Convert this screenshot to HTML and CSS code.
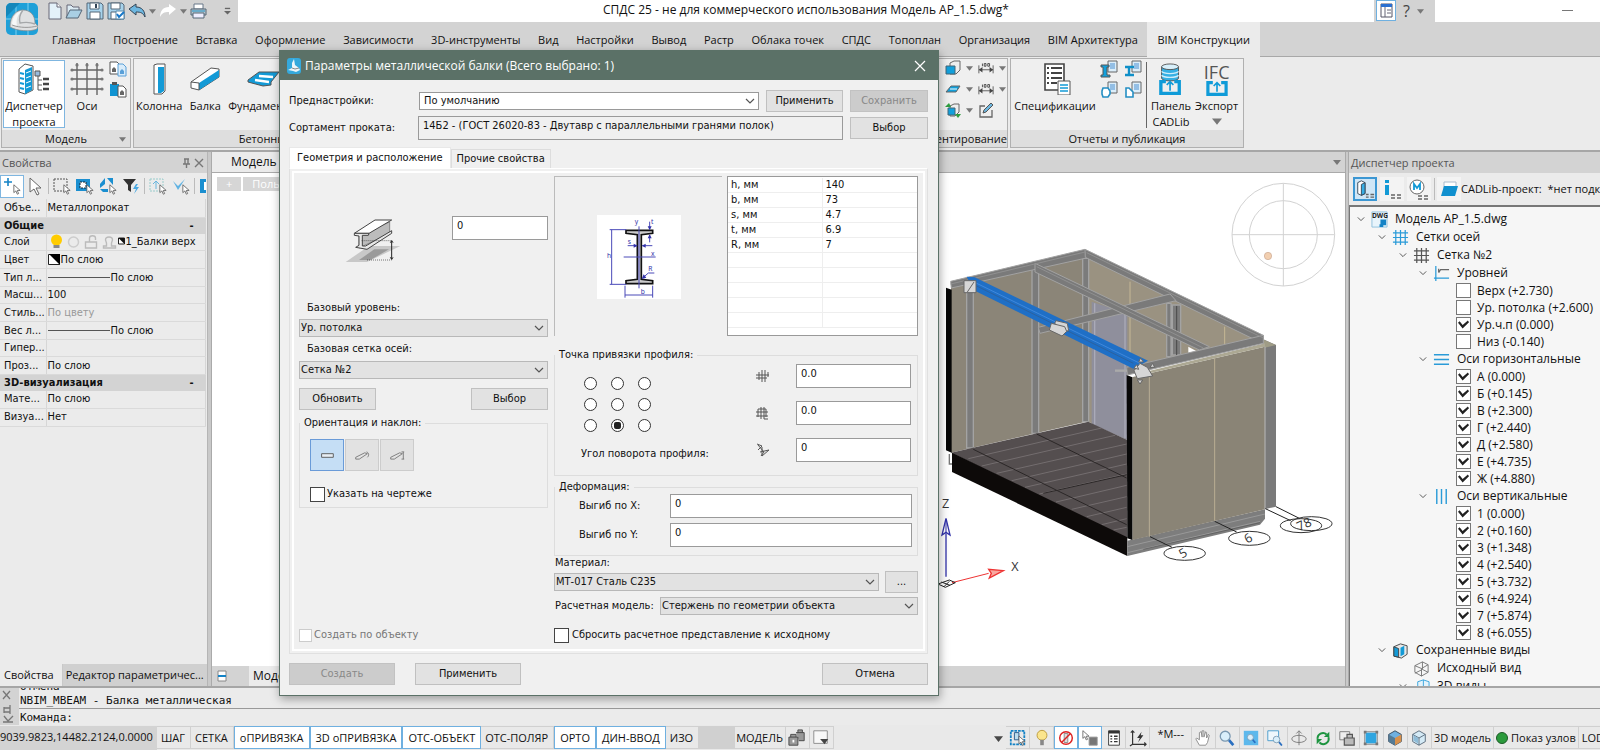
FILE: index.html
```html
<!DOCTYPE html>
<html lang="ru">
<head>
<meta charset="utf-8">
<title>СПДС 25</title>
<link rel="stylesheet" href="styles.css">
</head>
<body>
<svg class="defs" aria-hidden="true">
  <symbol id="i-tri" viewBox="0 0 8 6"><path d="M0 1h8L4 6z" fill="#777"/></symbol>
  <symbol id="i-chev" viewBox="0 0 10 10"><path d="M1 3l4 4 4-4" fill="none" stroke="#555" stroke-width="1.2"/></symbol>
  <symbol id="i-cursor" viewBox="0 0 10 14"><path d="M1 1v10l2.6-2.2L5.4 13l1.7-.8-1.8-4H9z" fill="#fff" stroke="#555"/></symbol>
  <symbol id="i-sheet" viewBox="0 0 18 18"><path d="M8 1h9v11H8z" fill="#dceefa" stroke="#666"/><path d="M10 4h5M10 6h5M10 8h5" stroke="#4a8fd0"/></symbol>
  <symbol id="i-up" viewBox="0 0 26 18"><path d="M8 2H2v14h22V2h-6" fill="none" stroke="#0f9bd8" stroke-width="4"/><path d="M13 13V3M9 6l4-4 4 4" fill="none" stroke="#0f9bd8" stroke-width="2"/></symbol>
  <symbol id="i-grid" viewBox="0 0 18 18"><path d="M4 1v16M9 1v16M14 1v16M1 4h16M1 9h16M1 14h16" fill="none" stroke="currentColor" stroke-width="1.3"/></symbol>
  <symbol id="i-cube" viewBox="0 0 18 18"><path d="M2 5l6-3 8 2v8l-6 4-8-2z" fill="#fff" stroke="#555"/><path d="M2 5l8 2v9M10 7l6-3" fill="none" stroke="#555"/></symbol>
  <symbol id="i-dim" viewBox="0 0 18 14"><path d="M1 4v9M17 4v9M1 9h16" stroke="#555" fill="none"/><path d="M1 9l4-3v6zM17 9l-4-3v6z" fill="#444"/><path d="M5 2v3M7 2h2v3H7zM11 2h2v3h-2z" stroke="#444" fill="none"/></symbol>
  <symbol id="i-mag" viewBox="0 0 18 18"><path d="M11 11l5 6" stroke="#2a6fc0" stroke-width="3"/><circle cx="7" cy="7" r="5.5" fill="#d9effb" stroke="#7a98b0" stroke-width="1.4"/></symbol>
</svg>

<header class="titlebar">
  <div class="quick">
    <svg class="logo" viewBox="0 0 32 32"><rect width="32" height="32" rx="5" fill="#1fa0d8"/><path d="M0 16h32M10 0v32M22 0v32" stroke="#7fd0f0"/><path d="M0 32V14L14 0H5a5 5 0 0 0-5 5z" fill="#1487bb"/><path d="M4 24C4 12 11 7 17 7c7 0 12 5 12 13l3 3-1 3c-7 3-20 2-27-2z" fill="#dfe1e2" stroke="#888" stroke-width=".7"/><path d="M6 23c0-9 4-14 10-15-5 4-6 9-5 15z" fill="#f7f8f8"/><path d="M17 7c-3 4-4 9-3 13 5-1 10-1 15 1" fill="none" stroke="#a5a8aa" stroke-width="1.4"/><path d="M6 22c8 3 18 3 25 1" stroke="#999" fill="none"/></svg>
    <button class="qb" aria-label="Новый"><svg width="14" height="18" viewBox="0 0 14 18"><path d="M1 1h8l4 4v12H1z" fill="#e4f1f9" stroke="#667"/><path d="M9 1v4h4" fill="#fff" stroke="#667"/></svg></button>
    <button class="qb" aria-label="Открыть"><svg width="18" height="18" viewBox="0 0 18 18"><path d="M2 15V3h4l2 2h6v3" fill="#dcebf3" stroke="#667"/><path d="M1 16L5 8h12l-4 8z" fill="#a9cfe4" stroke="#567"/></svg></button>
    <button class="qb" aria-label="Сохранить"><svg width="18" height="18" viewBox="0 0 18 18"><path d="M1 1h14l2 2v14H1z" fill="#a7d3ec" stroke="#567"/><path d="M4 1h9v6H4zM4 10h10v7H4z" fill="#fff" stroke="#567"/><path d="M10 2v4" stroke="#345" stroke-width="2"/></svg></button>
    <button class="qb" aria-label="Сохранить все"><svg width="18" height="18" viewBox="0 0 18 18"><path d="M1 1h14l2 2v14H1z" fill="#a7d3ec" stroke="#567"/><path d="M4 1h9v6H4zM4 10h10v7H4z" fill="#fff" stroke="#567"/><path d="M9 9h8v8H9z" fill="#fff" stroke="#58a"/><path d="M10 12l2 3 5-5" fill="none" stroke="#1677c8" stroke-width="2"/></svg></button>
    <button class="qb" aria-label="Отменить"><svg width="18" height="16" viewBox="0 0 18 16"><path d="M1 6l7-5v3c6 0 9 4 9 10-2-4-4-5-9-5v3z" fill="#6db7e0" stroke="#345"/></svg></button>
    <svg class="tri"><use href="#i-tri"/></svg>
    <button class="qb" aria-label="Повторить"><svg width="18" height="16" viewBox="0 0 18 16"><path d="M17 6l-7-5v3C4 4 1 8 1 14c2-4 4-5 9-5v3z" fill="#fff"/></svg></button>
    <svg class="tri"><use href="#i-tri"/></svg>
    <button class="qb" aria-label="Печать"><svg width="17" height="16" viewBox="0 0 17 16"><path d="M4 1h9v5H4z" fill="#fff" stroke="#678"/><path d="M1 6h15v6H1z" fill="#b7c7d0" stroke="#567"/><path d="M3 10h11v5H3z" fill="#eef" stroke="#567"/><path d="M2 8h13" stroke="#1b8fc4"/></svg></button>
    <svg class="more" viewBox="0 0 8 9"><path d="M1 1h6" stroke="#666" stroke-width="1.5"/><path d="M0 4h8L4 8z" fill="#666"/></svg>
  </div>
  <h1 class="app-title">СПДС 25 - не для коммерческого использования Модель AP_1.5.dwg*</h1>
  <div class="help">
    <button class="help-on" aria-label="Интерфейс"><svg width="13" height="15" viewBox="0 0 13 15"><path d="M1 1h11v13H1z" fill="#fff" stroke="#556"/><path d="M1 1h11v3H1z" fill="#2a6fd0"/><path d="M5 4v10M7 7h4M7 10h4" stroke="#667"/></svg></button>
    <button class="help-q">?</button>
    <svg class="tri"><use href="#i-tri"/></svg>
  </div>
  <div class="sys"><span class="min"></span></div>
</header>

<nav class="menu">
  <a href="#">Главная</a><a href="#">Построение</a><a href="#">Вставка</a><a href="#">Оформление</a><a href="#">Зависимости</a><a href="#">3D-инструменты</a><a href="#">Вид</a><a href="#">Настройки</a><a href="#">Вывод</a><a href="#">Растр</a><a href="#">Облака точек</a><a href="#">СПДС</a><a href="#">Топоплан</a><a href="#">Организация</a><a href="#">BIM Архитектура</a><a href="#" class="active">BIM Конструкции</a>
</nav>

<section class="ribbon">
  <div class="group g-model">
    <div class="tools">
      <button class="big on"><svg viewBox="0 0 34 32"><path d="M2 6l6-5 8 2v24l-8 4-6-2z" fill="#fff" stroke="#555"/><path d="M8 7l7-3v23l-7 4z" fill="#139ad6"/><path d="M9 10l5-2M9 15l5-2M9 20l5-2M9 25l5-2" stroke="#fff"/><path d="M3 10l4 1M3 15l4 1M3 20l4 1M3 25l4 1" stroke="#139ad6" stroke-width="2"/><path d="M18 8h5v5h-5z" fill="#9bd" stroke="#555"/><path d="M21 13v14h4M21 17h4M21 22h4" fill="none" stroke="#555"/><path d="M26 16h6M26 21h6M26 26h6" stroke="#444" stroke-width="2.6"/></svg><span>Диспетчер<br>проекта</span></button>
      <button class="big"><svg viewBox="0 0 34 32"><path d="M7 0v32M17 0v32M27 0v32M1 7h32M1 16h32M1 26h32" stroke="#666" stroke-width="1.4"/><g fill="#777"><circle cx="7" cy="2" r="1.6"/><circle cx="17" cy="2" r="1.6"/><circle cx="27" cy="2" r="1.6"/><circle cx="2" cy="7" r="1.6"/><circle cx="2" cy="16" r="1.6"/><circle cx="2" cy="26" r="1.6"/><circle cx="32" cy="7" r="1.6"/><circle cx="32" cy="16" r="1.6"/><circle cx="32" cy="26" r="1.6"/></g></svg><span>Оси</span></button>
      <div class="minis one">
        <svg viewBox="0 0 18 16"><path d="M1 1h7l2 2v10H1z" fill="#fff" stroke="#555"/><path d="M3 11V8l2-2 2 2v3z" fill="#666"/><path d="M9 3h5l3 3v9H9z" fill="#d9ecfa" stroke="#5aa0d8"/><path d="M11 13v-3l2-2 2 2v3z" fill="#5aa0d8"/></svg>
        <svg viewBox="0 0 18 16"><path d="M1 2h9v12H1z" fill="#0f93d2"/><path d="M3 0h5v3H3z" fill="#555"/><path d="M9 4h5l3 3v8H9z" fill="#fff" stroke="#555"/><path d="M11 13v-3l2-2 2 2v3z" fill="#666"/></svg>
      </div>
    </div>
    <div class="caption">Модель<svg class="tri"><use href="#i-tri"/></svg></div>
  </div>
  <div class="group g-concrete">
    <div class="tools">
      <button class="big"><svg viewBox="0 0 34 32"><path d="M12 2l3-1h8v27l-3 3h-8z" fill="#fff" stroke="#555"/><path d="M16 4h6v24l-3 2h-3z" fill="#139ad6"/></svg><span>Колонна</span></button>
      <button class="big"><svg viewBox="0 0 34 32"><path d="M3 19L23 5l8 1v8L11 27l-8-2z" fill="#fff" stroke="#555"/><path d="M11 20L31 7v7L11 27z" fill="#139ad6"/><path d="M3 19l8 1v7" fill="none" stroke="#555"/></svg><span>Балка</span></button>
      <button class="big"><svg viewBox="0 0 34 32"><path d="M2 17l11-8h20l-8 10v3l-8 1-15-4z" fill="#139ad6" stroke="#555"/><path d="M9 17l14 2M13 13l14 1" stroke="#fff" stroke-width="2.4"/></svg><span>Фундаменты</span></button>
    </div>
    <div class="caption">Бетонные конструкции</div>
  </div>
  <div class="group g-doc">
    <div class="tools end">
      <div class="minirows">
        <div><svg viewBox="0 0 16 16"><path d="M5 3l4-2h6v9l-4 4H5z" fill="#eee" stroke="#666"/><path d="M1 6h9v8H1z" fill="#12a0dc" stroke="#467"/></svg><svg class="tri"><use href="#i-tri"/></svg><svg><use href="#i-dim"/></svg><svg class="tri"><use href="#i-tri"/></svg></div>
        <div><svg viewBox="0 0 16 16"><path d="M1 11l5-6h9l-4 6z" fill="#12a0dc" stroke="#666"/><path d="M5 8h7" stroke="#fff"/></svg><svg class="tri"><use href="#i-tri"/></svg><svg><use href="#i-dim"/></svg><svg class="tri"><use href="#i-tri"/></svg></div>
        <div><svg viewBox="0 0 16 16"><path d="M5 4l4-2h5v8l-4 4H5z" fill="#eee" stroke="#666"/><path d="M3 6h7v7H3z" fill="#12a0dc" stroke="#467"/><path d="M0 5l4-4 2 4zM10 12l3 4 3-4z" fill="#2e9e3e"/></svg><svg class="tri"><use href="#i-tri"/></svg><svg viewBox="0 0 16 16"><path d="M7 4H2v11h12V8" fill="none" stroke="#666" stroke-width="1.3"/><path d="M5 11l1-3 7-7 2 2-7 7z" fill="#6db7e0" stroke="#555"/></svg></div>
      </div>
    </div>
    <div class="caption right">Документирование</div>
  </div>
  <div class="group g-report">
    <div class="tools">
      <button class="big wide"><svg viewBox="0 0 34 32"><path d="M7 1h19v26H7z" fill="#fff" stroke="#444" stroke-width="1.6"/><path d="M9 5h2M13 5h11M9 10h2M13 10h11M9 15h2M13 15h11M9 20h2M13 20h6" stroke="#444" stroke-width="2"/><path d="M20 18h12v14H20z" fill="#fff" stroke="#555"/><path d="M22 22h8M22 25h8M22 28h8" stroke="#139ad6" stroke-width="1.5"/></svg><span>Спецификации</span></button>
      <div class="minis">
        <svg viewBox="0 0 18 18"><use href="#i-sheet"/><path d="M1 5h8v2H7v8h3v2H1v-2h2V7H1z" fill="#12a0dc" stroke="#555"/></svg>
        <svg viewBox="0 0 18 18"><use href="#i-sheet"/><path d="M1 7h9M5 7v8M1 15h9" stroke="#0f8fc8" stroke-width="2.4" fill="none"/></svg>
        <svg viewBox="0 0 18 18"><use href="#i-sheet"/><path d="M3 7h5l2 3v3l-2 3H3l-1-3v-3z" fill="#fff" stroke="#258fc4" stroke-width="1.6"/></svg>
        <svg viewBox="0 0 18 18"><use href="#i-sheet"/><path d="M2 7h3l4 4v5H2z" fill="#fff" stroke="#258fc4" stroke-width="1.6"/></svg>
      </div>
      <div class="vline"></div>
      <button class="big"><svg viewBox="0 0 34 34"><path d="M7 4v12c0 4 18 4 18 0V4" fill="#35b0e4" stroke="#555"/><ellipse cx="16" cy="4" rx="9" ry="3" fill="#d8f0fb" stroke="#555"/><path d="M7 9c2 3 16 3 18 0M7 13c2 3 16 3 18 0" fill="none" stroke="#cfeefa" stroke-width="1.5"/><use href="#i-up" x="3" y="18" width="26" height="16"/></svg><span>Панель<br>CADLib</span></button>
      <button class="big ifc"><b>IFC</b><svg viewBox="0 0 26 18"><use href="#i-up"/></svg><span>Экспорт</span><svg class="tri"><use href="#i-tri"/></svg></button>
    </div>
    <div class="caption">Отчеты и публикация</div>
  </div>
</section>

<main class="work">
  <aside class="props">
    <div class="panel-title"><span>Свойства</span><svg class="pin" viewBox="0 0 22 10"><path d="M2 1h5M3 1v5M6 1v5M1 6h7M4.500 6v4M13 1l8 8M21 1l-8 8" stroke="#777" stroke-width="1.4" fill="none"/></svg></div>
    <div class="toolbar">
      <button class="tb on" aria-label="Добавить"><svg viewBox="0 0 20 20"><path d="M6 2v8M2 6h8" stroke="#1583c6" stroke-width="1.6"/><use href="#i-cursor" x="11" y="8" width="8" height="11"/></svg></button>
      <button class="tb" aria-label="Выбор"><svg viewBox="0 0 20 20"><path d="M5 2v14l4-3 3 6 2-1-3-6h5z" fill="#fff" stroke="#666"/></svg></button>
      <i class="sep"></i>
      <button class="tb" aria-label="Рамка"><svg viewBox="0 0 20 20"><path d="M2 3h13v12H2z" fill="none" stroke="#555" stroke-dasharray="2 1"/><use href="#i-cursor" x="11" y="8" width="8" height="11"/></svg></button>
      <button class="tb" aria-label="Все"><svg viewBox="0 0 20 20"><path d="M1 3h14v12H1z" fill="#1b8fd0"/><path d="M5 6h6v6H5z" fill="#fff" stroke="#123" stroke-dasharray="2 1"/><use href="#i-cursor" x="11" y="8" width="8" height="11"/></svg></button>
      <button class="tb" aria-label="Инверсия"><svg viewBox="0 0 20 20"><path d="M7 2v6L2 12V8zM9 2h6v7zM2 13h8v3H5z" fill="#1b8fd0"/><use href="#i-cursor" x="11" y="8" width="8" height="11"/></svg></button>
      <button class="tb" aria-label="Фильтр"><svg viewBox="0 0 20 20"><path d="M2 3h13l-5 6v7l-3-2V9z" fill="#333"/><path d="M15 8l-3 5h3l-2 5 5-7h-3l2-3z" fill="#4aa8e0"/></svg></button>
      <i class="sep"></i>
      <button class="tb" aria-label="Поднять"><svg viewBox="0 0 20 20"><path d="M2 3h13v12H2z" fill="none" stroke="#9cc" stroke-dasharray="2 1"/><path d="M8 13V5M5 8l3-3 3 3" fill="none" stroke="#69b5dd"/><use href="#i-cursor" x="11" y="8" width="8" height="11"/></svg></button>
      <button class="tb" aria-label="Применить выбор"><svg viewBox="0 0 20 20"><path d="M2 5l5 5 7-7-7 11z" fill="#5fb2e2"/><use href="#i-cursor" x="11" y="8" width="8" height="11"/></svg></button>
      <i class="sep"></i>
      <svg class="cut" viewBox="0 0 6 16"><path d="M0 1h6v14H0z" fill="#1b8fd0"/><path d="M4 4h2v8H4z" fill="#fff"/></svg>
    </div>
    <table class="grid">
      <tr><th>Объе...</th><td>Металлопрокат</td></tr>
      <tr class="head"><th colspan="2">Общие<span>-</span></th></tr>
      <tr><th>Слой</th><td><div class="cell"><svg class="layer" viewBox="0 0 76 16"><circle cx="8" cy="6" r="5.500" fill="#fc0"/><path d="M5 11h6v3H5z" fill="#888"/><circle cx="25" cy="8" r="5" fill="none" stroke="#ccc" stroke-width="1.500"/><path d="M37 8h11v6H37zM41 8V4c0-3 6-3 6 0v2M55 12h3V9l-1-3c0-4 7-4 7 0l-1 3v3h4v2H55z" fill="none" stroke="#bbb" stroke-width="1.4"/><path d="M70 4h6v6h-6z" fill="#fff" stroke="#222"/><path d="M70 4h6v6z" fill="#111"/></svg>1_Балки верх</div></td></tr>
      <tr><th>Цвет</th><td><div class="cell"><svg class="swatch" viewBox="0 0 12 11"><path d="M.5.5h11v10H.5z" fill="#fff" stroke="#222"/><path d="M1 0h11v11z"/></svg>По слою</div></td></tr>
      <tr><th>Тип л...</th><td><div class="cell"><i class="line"></i>По слою</div></td></tr>
      <tr><th>Масш...</th><td>100</td></tr>
      <tr><th>Стиль...</th><td class="dim">По цвету</td></tr>
      <tr><th>Вес л...</th><td><div class="cell"><i class="line"></i>По слою</div></td></tr>
      <tr><th>Гипер...</th><td></td></tr>
      <tr><th>Проз...</th><td>По слою</td></tr>
      <tr class="head"><th colspan="2">3D-визуализация<span>-</span></th></tr>
      <tr><th>Мате...</th><td>По слою</td></tr>
      <tr><th>Визуа...</th><td>Нет</td></tr>
    </table>
    <div class="tabs-bottom"><button class="sel">Свойства</button><button>Редактор параметричес...</button></div>
  </aside>

  <section class="view">
    <div class="doc-tabs"><button>Модель AP_1.5</button><svg class="tri"><use href="#i-tri"/></svg></div>
    <div class="canvas">
      <div class="chips"><span>+</span><span class="w">Пользовательский</span></div>
      <svg class="scene" viewBox="0 69 1245 1281">
        <g fill="none" stroke="#d2d2d2" stroke-width="3"><circle cx="1060" cy="254" r="154"/><circle cx="1060" cy="254" r="102"/><path d="M1060 100v308M906 254h308"/></g>
        <circle cx="1014" cy="318" r="11" fill="#f2cfb0" stroke="#c9a892" stroke-width="2"/>
        <path d="M63 410L465 320V816L63 908z" fill="#8b8578"/>
        <path d="M475 325L1000 568 835 610 592 660V868L475 815z" fill="#9a9281"/>
        <path d="M485 455L592 490V870L485 822z" fill="#8f8f9c"/>
        <path d="M494 460V824M585 490V864" stroke="#aaaab8" stroke-width="4"/>
        <path d="M600 395V640M884 530V590" stroke="#c5b795" stroke-width="3"/>
        <path d="M775 590l25 14-25 6z" fill="#fff"/>
        <g fill="#7b7b7b" stroke="#a3a3a3" stroke-width="4"><path d="M110 400h20v494h-20zM306 350h20v500h-20zM458 325h18v490h-18zM710 460h13v160h-13zM727 465h25v150h-25z"/></g>
        <path d="M740 468v148" stroke="#4a4a4a" stroke-width="3"/>
        <path d="M63 908L475 815 592 870V1165z" fill="#544e4f"/>
        <path d="M115 926l400-92M155 948l400-92M200 970l390-88M245 992l345-80M285 1012l305-70M328 1032l262-60M378 1056l212-50M425 1078l165-38M470 1100l120-28M515 1124l75-18M550 1140l40-8" stroke="#837d7e" stroke-width="2"/>
        <path d="M320 852l270 132M130 898l460 226M340 1030l250-56" stroke="#2b2727" stroke-width="3"/>
        <path d="M66 908L592 1162V1218L66 966z" fill="#0d0a09"/>
        <path d="M48 413l17 6v489l-17-7z" fill="#080808"/><path d="M58 912v30h8" fill="none" stroke="#777" stroke-width="4"/>
        <path d="M592 1172L1005 1078V1106L990 1124 592 1218z" fill="#7d7d7d"/><path d="M592 1190L1005 1092M592 1208l398-94" stroke="#999" stroke-width="3"/>
        <path d="M640 1198l350-80" stroke="#555" stroke-width="2"/>
        <path d="M1000 568l38 17v485l-34 8z" fill="#7a7a7a"/><path d="M998 568l40 17-34 8z" fill="#9f9c86"/>
        <path d="M607 682L1005 590V1078L607 1170z" fill="#8a8476"/>
        <path d="M607 682L660 662 1005 580v10z" fill="#aca893"/>
        <path d="M658 668v492M854 625v488" stroke="#b9ae94" stroke-width="3"/>
        <path d="M1005 590v488" stroke="#b9b9b9" stroke-width="3"/>
        <path d="M590 675l17 7v488l-15-5z" fill="#080808"/>
        <g fill="#7a7a7a" stroke="#a2a2a2" stroke-width="3">
          <path d="M62 394L465 298 478 322 64 414z"/>
          <path d="M465 298L1000 556 998 578 960 562 466 322z"/>
          <path d="M325 532L720 432 738 452 330 550z"/>
          <path d="M315 340L838 590 808 600 315 366z"/>
          <path d="M590 652L1000 556v24L655 660 592 675z"/>
        </g>
        <path d="M62 402L465 306M470 308L1000 564M320 350L820 594" stroke="#909090" stroke-width="3" fill="none"/>
        <path d="M110 380l24 2 520 250-44 24L130 420z" fill="#1f6fc6"/><path d="M130 395L630 640" stroke="#3f88dc" stroke-width="3"/><path d="M140 408L610 640" stroke="#2c62a0" stroke-width="3"/>
        <g fill="#d6d6d6" stroke="#666" stroke-width="3"><path d="M102 392h36v36h-36z"/><path d="M112 426l20-30"/><path d="M374 520l4-8 34 8 4 22-14 2z"/><path d="M364 520l40 10 6 14-14 14-38-18z"/><path d="M630 640l22 12 16 26-46 8-10-24z"/><path d="M632 624l8 12h-14zM668 640l6 12h-14zM630 702l8-12h-16zM612 654l8-10 6 14z"/></g>
        <path d="M555 662h36" stroke="#aaa" stroke-width="7"/>
        <path d="M660 1160l66 32M854 1114l66 32M1006 1076l76 36M1038 1070l72 36" stroke="#222" stroke-width="3"/>
        <g fill="none" stroke="#333" stroke-width="3"><ellipse cx="764" cy="1210" rx="62" ry="21"/><ellipse cx="958" cy="1165" rx="62" ry="21"/><ellipse cx="1113" cy="1127" rx="62" ry="21"/><ellipse cx="1144" cy="1121" rx="62" ry="21"/></g>
        <g class="axis"><text transform="translate(756 1226) rotate(-30)">5</text><text transform="translate(952 1181) rotate(-30)">6</text><text transform="translate(1108 1144) rotate(-25)">78</text><text x="36" y="1074">Z</text><text x="244" y="1264">X</text></g>
        <path d="M48 1280V1150" stroke="#33a" stroke-width="4"/><path d="M48 1105l-12 50 12-8 12 8z" fill="none" stroke="#33a" stroke-width="4"/><path d="M48 1108v40" stroke="#33a" stroke-width="3"/>
        <path d="M66 1298l110-28" stroke="#e33" stroke-width="3"/><path d="M220 1262l-44-4 8 12-6 14z" fill="#f8a8a0" stroke="#e33" stroke-width="4"/>
        <path d="M24 1302l34-12 18 8-30 14zM34 1296l26 10M42 1310l16-16" fill="none" stroke="#222" stroke-width="3"/>
      </svg>
    </div>
    <div class="sheet-tabs"><svg viewBox="0 0 10 12"><path d="M1 1h8v10H1z" fill="#fff" stroke="#888"/><path d="M1 6h8" stroke="#1583c6" stroke-width="2"/></svg><button>Модель</button></div>
  </section>

  <aside class="project">
    <div class="panel-title"><span>Диспетчер проекта</span></div>
    <div class="ptools">
      <button class="pt on" aria-label="Структура"><svg viewBox="0 0 22 22"><path d="M3 4l4-2 4 2v12l-4 2-4-2z" fill="#fff" stroke="#345"/><path d="M7 6l4-2v12l-4 2z" fill="#35aee6" stroke="#345"/><path d="M12 17h3M12 20h3M17 17h4M17 20h4" stroke="#666" stroke-width="1.500"/></svg></button>
      <button class="pt" aria-label="Сведения"><svg viewBox="0 0 22 22"><path d="M4 2h4v3H4zM4 7h4v10H4z" fill="#139ad6"/><path d="M10 17h4M10 20h4M16 17h4M16 20h4" stroke="#666" stroke-width="1.500"/></svg></button>
      <button class="pt" aria-label="Материалы"><svg viewBox="0 0 22 22"><circle cx="9" cy="9" r="7" fill="#fff" stroke="#666"/><path d="M6 12V6l3 4 3-4v6" fill="none" stroke="#139ad6" stroke-width="1.800"/><path d="M10 18h4M10 21h4M16 18h4M16 21h4" stroke="#666" stroke-width="1.500"/></svg></button>
      <i class="sep"></i>
      <button class="pt" aria-label="Проект"><svg viewBox="0 0 22 22"><path d="M6 4h12v8H6z" fill="#fff" stroke="#abc"/><path d="M3 18L6 8h14l-3 10z" fill="#1090cf"/></svg></button>
      <span class="pname">CADLib-проект:&nbsp; *нет подключения*</span>
    </div>
    <div class="tree">
      <div class="node l0"><svg class="ch"><use href="#i-chev"/></svg><svg class="ic" viewBox="0 0 18 18"><path d="M1 1h16v16H1z" fill="#e8f4fb" stroke="#8fc0dc"/><path d="M10 9h6v6h-3v2H9v-3h1z" fill="#1583c6"/><text class="dwg" x="1" y="7">DWG</text></svg>Модель AP_1.5.dwg</div>
      <div class="node l1"><svg class="ch"><use href="#i-chev"/></svg><svg class="ic blue"><use href="#i-grid"/></svg>Сетки осей</div>
      <div class="node l2"><svg class="ch"><use href="#i-chev"/></svg><svg class="ic"><use href="#i-grid"/></svg>Сетка №2</div>
      <div class="node l3"><svg class="ch"><use href="#i-chev"/></svg><svg class="ic" viewBox="0 0 18 18"><path d="M3 1v16M1 14h16" stroke="#2a9bd8" stroke-width="1.300"/><path d="M17 5h-9l-2 3M6 8V4" fill="none" stroke="#666" stroke-width="1.300"/></svg>Уровней</div>
      <label><input type="checkbox">Верх (+2.730)</label>
      <label><input type="checkbox">Ур. потолка (+2.600)</label>
      <label><input type="checkbox" checked>Ур.ч.п (0.000)</label>
      <label><input type="checkbox">Низ (-0.140)</label>
      <div class="node l3"><svg class="ch"><use href="#i-chev"/></svg><svg class="ic" viewBox="0 0 18 18"><path d="M1 4h16M1 9h16M1 14h16" stroke="#2a9bd8" stroke-width="1.500"/></svg>Оси горизонтальные</div>
      <label><input type="checkbox" checked>А (0.000)</label>
      <label><input type="checkbox" checked>Б (+0.145)</label>
      <label><input type="checkbox" checked>В (+2.300)</label>
      <label><input type="checkbox" checked>Г (+2.440)</label>
      <label><input type="checkbox" checked>Д (+2.580)</label>
      <label><input type="checkbox" checked>Е (+4.735)</label>
      <label><input type="checkbox" checked>Ж (+4.880)</label>
      <div class="node l3"><svg class="ch"><use href="#i-chev"/></svg><svg class="ic" viewBox="0 0 18 18"><path d="M4 1v16M9 1v16M14 1v16" stroke="#2a9bd8" stroke-width="1.500"/></svg>Оси вертикальные</div>
      <label><input type="checkbox" checked>1 (0.000)</label>
      <label><input type="checkbox" checked>2 (+0.160)</label>
      <label><input type="checkbox" checked>3 (+1.348)</label>
      <label><input type="checkbox" checked>4 (+2.540)</label>
      <label><input type="checkbox" checked>5 (+3.732)</label>
      <label><input type="checkbox" checked>6 (+4.924)</label>
      <label><input type="checkbox" checked>7 (+5.874)</label>
      <label><input type="checkbox" checked>8 (+6.055)</label>
      <div class="node l1"><svg class="ch"><use href="#i-chev"/></svg><svg class="ic" viewBox="0 0 18 18"><path d="M2 5l7-3 7 2v9l-6 4-8-2z" fill="#e8e8e8" stroke="#444"/><path d="M2 5l5 2v9l-5-1z" fill="#139ad6" stroke="#444"/><path d="M9 6l4-2v9l-4 2z" fill="#139ad6"/></svg>Сохраненные виды</div>
      <div class="node l2"><i class="ch"></i><svg class="ic" viewBox="0 0 18 18"><path d="M2 6l8-4 6 3v8l-7 4-7-4zM2 6l7 3 7-4M9 9v8M10 2v8l-8 4M10 10l6 3" fill="none" stroke="#777"/></svg>Исходный вид</div>
      <div class="node l2"><svg class="ch"><use href="#i-chev"/></svg><svg class="ic" viewBox="0 0 18 18"><path d="M5 4l6-2 6 2v12H5zM11 2v9" fill="#e4f3fb" stroke="#3aa5dd"/></svg>3D виды</div>
    </div>
  </aside>
</main>

<section class="command">
  <svg class="cmd-side" viewBox="0 0 18 36"><path d="M3 3l7 8M10 3l-7 8M4 19v6M4 20h6M4 24h6M10 17v9M3 34h10M4 28l4 5 5-5" fill="none" stroke="#777" stroke-width="1.300"/></svg>
  <div class="cmd-main">
    <div class="history"><p class="old">Отмена</p><p>NBIM_MBEAM - Балка металлическая</p></div>
    <label class="prompt">Команда:<input type="text" aria-label="Команда"></label>
  </div>
</section>

<footer class="status">
  <output class="coords">9039.9823,14482.2124,0.0000</output>
  <button>ШАГ</button><button>СЕТКА</button><button class="on">оПРИВЯЗКА</button><button class="on">3D оПРИВЯЗКА</button><button class="on">ОТС-ОБЪЕКТ</button><button>ОТС-ПОЛЯР</button><button class="on">ОРТО</button><button class="on">ДИН-ВВОД</button><button>ИЗО</button>
  <i class="gapbox"></i>
  <button class="model">МОДЕЛЬ</button>
  <button class="sb" aria-label="Замок"><svg viewBox="0 0 20 20"><path d="M1 9h10v9H1zM3 9V6h6v3M9 4h9v9h-6M11 4V1h5v3" fill="#999" stroke="#444"/><path d="M5 12h2v3H5z" fill="#fff"/></svg></button>
  <button class="sb" aria-label="Меню"><svg viewBox="0 0 20 20"><path d="M2 2h15v14H2z" fill="#f8f8f8" stroke="#888"/><path d="M9 11h9l-4 6z" fill="#444"/></svg></button>
  <i class="space"></i>
  <svg class="tri dark"><use href="#i-tri"/></svg>
  <button class="sb" aria-label="Выделение"><svg viewBox="0 0 20 20"><path d="M2 2h15v15H2z" fill="none" stroke="#1583c6" stroke-width="2" stroke-dasharray="3 1"/><path d="M6 4h5v8H6z" fill="#bde" stroke="#258"/><use href="#i-cursor" x="10" y="7" width="9" height="12"/></svg></button>
  <button class="sb" aria-label="Лампа"><svg viewBox="0 0 20 20"><circle cx="10" cy="7" r="5.500" fill="#fbe58c" stroke="#b9973a"/><path d="M8 12h4v6H8z" fill="#888"/></svg></button>
  <button class="sb on" aria-label="Запрет"><svg viewBox="0 0 20 20"><path d="M8 5h4v10H8z" fill="#ddd" stroke="#888"/><circle cx="10" cy="10" r="7" fill="none" stroke="#d22" stroke-width="1.600"/><path d="M5 15L15 5" stroke="#d22" stroke-width="1.600"/></svg></button>
  <button class="sb on" aria-label="Подсказка"><svg viewBox="0 0 20 20"><use href="#i-cursor" x="1" y="1" width="9" height="12"/><path d="M9 9h9v9H9z" fill="#777" stroke="#999"/></svg></button>
  <button class="sb" aria-label="Список"><svg viewBox="0 0 20 20"><path d="M4 2h12v16H4z" fill="#fff" stroke="#333"/><path d="M4 2h12v3H4z" fill="#333"/><path d="M6 8h2M10 8h4M6 11h2M10 11h4M6 14h2M10 14h4" stroke="#333" stroke-width="1.500"/></svg></button>
  <button class="sb" aria-label="Оси"><svg viewBox="0 0 20 20"><path d="M4 2v15h15M4 17l-3 2M2 4l2-2 2 2M17 15l2 2-2 2" fill="none" stroke="#333" stroke-width="1.300"/><path d="M14 3l-5 7h3l-2 5 6-8h-3z" fill="#333"/></svg></button>
  <button class="mask">*M---</button>
  <button class="sb" aria-label="Панорама"><svg viewBox="0 0 20 20"><path d="M6 18l-4-7 1-1 3 2V4l2-1 1 6V2l2 0v7l2-6 1 1v6l2-4 1 1-2 8-2 3z" fill="#fff" stroke="#888"/></svg></button>
  <button class="sb" aria-label="Масштаб"><svg viewBox="0 0 20 20"><use href="#i-mag" x="1" y="1" width="18" height="18"/></svg></button>
  <button class="sb" aria-label="Масштаб рамкой"><svg viewBox="0 0 20 20"><path d="M2 2h16v16H2z" fill="#5cb8ec"/><use href="#i-mag" x="5" y="5" width="11" height="11"/></svg></button>
  <button class="sb" aria-label="Масштаб окна"><svg viewBox="0 0 20 20"><path d="M2 2h12v11H2z" fill="#eef7fc" stroke="#49c"/><use href="#i-mag" x="7" y="7" width="12" height="12"/></svg></button>
  <button class="sb" aria-label="Орбита"><svg viewBox="0 0 20 20"><ellipse cx="10" cy="11" rx="8" ry="4" fill="none" stroke="#777"/><path d="M10 2v16M7 5l3-3 3 3" stroke="#777" fill="none"/></svg></button>
  <button class="sb" aria-label="Обновить вид"><svg viewBox="0 0 20 20"><path d="M4 11a6 6 0 0 1 10-5M16 9a6 6 0 0 1-10 6" fill="none" stroke="#1d9440" stroke-width="2.200"/><path d="M17 3v6h-6zM3 17v-6h6z" fill="#1d9440"/></svg></button>
  <button class="sb" aria-label="Блокировка"><svg viewBox="0 0 20 20"><path d="M2 3h11v9H2z" fill="#eee" stroke="#777"/><path d="M7 10h11v8H7zM10 10V6h6v4" fill="#bbb" stroke="#555" stroke-width="1.300"/></svg></button>
  <button class="sb" aria-label="Экран"><svg viewBox="0 0 20 20"><path d="M4 4h12v12H4z" fill="#2fa5e0"/><path d="M3 3h14v14H3z" fill="none" stroke="#888"/><path d="M2 2h3v3H2zM15 2h3v3h-3zM2 15h3v3H2zM15 15h3v3h-3z" fill="#777"/></svg></button>
  <button class="sb" aria-label="Заливка"><svg viewBox="0 0 20 20"><path d="M3 6l7-4 7 4v8l-7 4-7-4z" fill="#6fb0e0" stroke="#345"/><path d="M10 10l7-4v8l-7 4z" fill="#d9904a"/><path d="M3 6l7 4v8l-7-4z" fill="#557b96"/></svg></button>
  <button class="sb" aria-label="Контур"><svg viewBox="0 0 20 20"><path d="M3 6l7-4 7 4v8l-7 4-7-4z" fill="#d4eaf6" stroke="#567"/><path d="M3 6l7 4 7-4M10 10v8" fill="none" stroke="#567"/><path d="M4 7l5 3v6l-5-3z" fill="#8fbcd8"/></svg></button>
  <button class="txt">3D модель</button>
  <button class="txt"><i class="dot"></i>Показ узлов</button>
  <button class="txt lod">LOD</button>
</footer>

<section class="dialog" role="dialog" aria-labelledby="dlg-title">
  <header class="dlg-head"><svg width="14" height="16" viewBox="0 0 14 16"><rect width="14" height="16" rx="3" fill="#35a9dc"/><path d="M1 12l4-2V5l2-4 1 6 4 3 1 2-4 2-3-1z" fill="#eef6fa"/><path d="M5 10l3 1 4-1" fill="none" stroke="#888"/></svg><h2 id="dlg-title">Параметры металлической балки (Всего выбрано: 1)</h2><button aria-label="Закрыть"><svg width="12" height="12" viewBox="0 0 12 12"><path d="M1 1l10 10M11 1L1 11" stroke="#fff" stroke-width="1.200"/></svg></button></header>
  <div class="dlg-body">
    <div class="top">
      <label for="preset">Преднастройки:</label>
      <div class="row"><span class="select white"><select id="preset"><option>По умолчанию</option></select><svg><use href="#i-chev"/></svg></span><button class="btn">Применить</button></div>
      <button class="btn" disabled>Сохранить</button>
      <label for="profile">Сортамент проката:</label>
      <input id="profile" class="ro" type="text" readonly value="14Б2 - (ГОСТ 26020-83 - Двутавр с параллельными гранями полок)">
      <button class="btn">Выбор</button>
    </div>
    <div class="dlg-tabs"><button class="sel">Геометрия и расположение</button><button>Прочие свойства</button></div>
    <div class="page"><div class="page-in">
      <div class="left">
        <div class="level">
          <svg width="56" height="48" viewBox="0 0 168 144"><path d="M2 132L72 84h94L66 132z" fill="#c8c8c8"/><path d="M42 126L88 94h44l-56 32z" fill="#9a9a9a"/><path d="M42 90V50L134 12v34z" fill="#bcbcbc" stroke="#666" stroke-width="2"/><path d="M28 46L90 6h50L72 46z" fill="#fff" stroke="#444" stroke-width="3"/><path d="M28 46h44l-2 6H52v32h10l78-46v8L66 94l-34-6 10-6V54l-14-2z" fill="#e8e8e8" stroke="#444" stroke-width="3"/><path d="M50 68h90M66 126h74" stroke="#333" stroke-width="2" stroke-dasharray="3 3"/><path d="M140 68v56M136 74l4-6 4 6M136 118l4 6 4-6" fill="none" stroke="#222" stroke-width="3"/></svg>
          <input type="text" value="0" aria-label="Смещение">
        </div>
        <label class="lbl" for="lvl">Базовый уровень:</label>
        <span class="select"><select id="lvl"><option>Ур. потолка</option></select><svg><use href="#i-chev"/></svg></span>
        <label class="lbl second" for="net">Базовая сетка осей:</label>
        <span class="select"><select id="net"><option>Сетка №2</option></select><svg><use href="#i-chev"/></svg></span>
        <div class="pair"><button class="btn">Обновить</button><button class="btn">Выбор</button></div>
        <fieldset class="orient"><legend>Ориентация и наклон:</legend>
          <div class="toggles">
            <button class="on" aria-label="Горизонтально"><svg viewBox="0 0 20 14"><path d="M4 5h13v4H4z" fill="#e8eef4" stroke="#555"/></svg></button><button aria-label="Наклон 1"><svg viewBox="0 0 20 14"><path d="M3 9l10-5 3 1-9 6H3zM15 3c3 1 3 4 1 6" fill="none" stroke="#777"/></svg></button><button aria-label="Наклон 2"><svg viewBox="0 0 20 14"><path d="M3 9l10-5 3 1-9 6H3zM17 3v8M15 3h3M15 11h3" fill="none" stroke="#777"/></svg></button>
          </div>
          <label class="chk"><input type="checkbox">Указать на чертеже</label>
        </fieldset>
        <label class="chk off"><input type="checkbox" disabled>Создать по объекту</label>
      </div>
      <div class="rightcol">
        <div class="profile">
          <div class="preview"><svg width="84" height="84" viewBox="0 0 252 252"><path d="M0 0h252v252H0z" fill="#fff"/><path d="M87 46h80v9l-34 4v134l34 4v9H87v-9l34-4V59l-34-4z" fill="#ccc" stroke="#111" stroke-width="5"/><g fill="none" stroke="#4a4ab8" stroke-width="3"><path d="M126 34v186M80 126h96M44 44v164M38 44h50M38 208h50M84 212v36M167 212v36M84 240h83M158 20v22M158 60v22M92 92h28M136 92h30M138 188l16-14h18"/></g><path d="M158 46l-6-12h12zM158 58l-6 12h12zM122 92l-12-6v12zM134 92l12-6v12zM134 192l14-4-8-10z" fill="#33a"/><g class="dimtxt"><text x="113" y="27">y</text><text x="162" y="27">t</text><text x="92" y="88">s</text><text x="162" y="124">x</text><text x="30" y="129">h</text><text x="154" y="168">R</text><text x="131" y="238">b</text></g></svg></div>
          <div class="listbox"><table class="list">
            <tr><td>h, мм</td><td>140</td></tr><tr><td>b, мм</td><td>73</td></tr><tr><td>s, мм</td><td>4.7</td></tr><tr><td>t, мм</td><td>6.9</td></tr><tr><td>R, мм</td><td>7</td></tr><tr><td></td><td></td></tr><tr><td></td><td></td></tr><tr><td></td><td></td></tr><tr><td></td><td></td></tr><tr><td></td><td></td></tr>
          </table></div>
        </div>
        <fieldset class="anchor"><legend>Точка привязки профиля:</legend>
          <div class="a-left">
            <div class="radios"><input type="radio" name="p" aria-label="1"><input type="radio" name="p" aria-label="2"><input type="radio" name="p" aria-label="3"><input type="radio" name="p" aria-label="4"><input type="radio" name="p" aria-label="5"><input type="radio" name="p" aria-label="6"><input type="radio" name="p" aria-label="7"><input type="radio" name="p" aria-label="8" checked><input type="radio" name="p" aria-label="9"></div>
            <label for="ang">Угол поворота профиля:</label>
          </div>
          <div class="a-right">
            <div><svg viewBox="0 0 14 14"><path d="M0 6h13M0 9h11M3 3v8M6 1v12M9 1v12M12 3v5" fill="none" stroke="#555"/></svg><input type="text" value="0.0" aria-label="Смещение X"></div>
            <div><svg viewBox="0 0 14 14"><path d="M0 6h12M0 10h12M2 3v8M5 1v12M8 1v12M2 3h8v8M8 13h4" fill="none" stroke="#555"/></svg><input type="text" value="0.0" aria-label="Смещение Y"></div>
            <div><svg viewBox="0 0 14 14"><path d="M1 1l5 2-4 4M2 2l6 7M6 4v9l7-6-9 2M5 13l3-4" fill="none" stroke="#555"/></svg><input id="ang" type="text" value="0"></div>
          </div>
        </fieldset>
        <fieldset class="deform"><legend>Деформация:</legend>
          <label for="bx">Выгиб по X:</label><input id="bx" type="text" value="0">
          <label for="by">Выгиб по Y:</label><input id="by" type="text" value="0">
        </fieldset>
        <label class="mat" for="mat">Материал:</label>
        <div class="row mrow"><span class="select"><select id="mat"><option>МТ-017 Сталь С235</option></select><svg><use href="#i-chev"/></svg></span><button class="btn dots">...</button></div>
        <div class="row crow"><label for="calc">Расчетная модель:</label><span class="select"><select id="calc"><option>Стержень по геометрии объекта</option></select><svg><use href="#i-chev"/></svg></span></div>
        <label class="chk reset"><input type="checkbox">Сбросить расчетное представление к исходному</label>
      </div>
    </div></div>
    <div class="actions"><button class="btn" disabled>Создать</button><button class="btn">Применить</button><button class="btn cancel">Отмена</button></div>
  </div>
</section>
</body>
</html>
```

FILE: styles.css
```css
* { box-sizing: border-box; }
body {
  margin: 0;
  min-height: 100vh;
  height: 100vh;
  display: flex;
  flex-direction: column;
  position: relative;
  overflow: hidden;
  background: #d3d3d3;
  color: #111;
  font: 11px/16px "Open Sans", "Noto Sans", sans-serif;
}
button, input, select { font: inherit; color: inherit; margin: 0; }
button { border: 0; background: none; padding: 0; }
svg { display: block; flex: none; }
p, h1, h2 { margin: 0; font-weight: 400; }
.defs { position: absolute; width: 0; height: 0; }
.tri { width: 7px; height: 6px; }
.dark { filter: brightness(0.6); }

.titlebar { display: flex; height: 22px; flex: none; background: #fff; }
.quick { display: flex; align-items: center; gap: 3px; width: 238px; padding-left: 6px; background: #d3d3d3; position: relative; }
.quick .more { width: 7px; height: 9px; margin-left: 14px; }
.logo { width: 32px; height: 32px; align-self: flex-start; margin: 3px 7px 0 0; }
.app-title { flex: 1; text-align: center; font-size: 12px; line-height: 20px; }
.help { display: flex; align-items: center; width: 61px; gap: 7px; background: #d3d3d3; padding-left: 2px; }
.help-on { width: 20px; height: 21px; border: 1px solid #6fb0e0; background: #fff; display: grid; place-items: center; align-self: flex-start; }
.help-q { font-size: 16px; line-height: 20px; color: #444; }
.sys { width: 165px; display: flex; justify-content: center; padding: 10px 0 0 100px; }
.min { width: 11px; height: 1px; background: #777; }

.menu { display: flex; align-items: stretch; justify-content: space-between; height: 35px; flex: none; padding: 0 340px 0 44px; border-bottom: 1px solid #a8a8a8; }
.menu a { color: inherit; text-decoration: none; line-height: 36px; padding: 0 8px; white-space: nowrap; }
.menu .active { background: #ebebeb; height: 35px; padding: 0 10px; }

.ribbon { display: flex; gap: 2px; flex: none; height: 95px; padding: 1px 1px 2px; background: #ebebeb; border-bottom: 2px solid #a6a6a6; }
.group { display: flex; flex-direction: column; border: 1px solid #b0b0b0; background: #efefef; min-height: 0; }
.tools { flex: 1; min-height: 0; display: flex; align-items: flex-start; padding: 1px; }
.tools.end { justify-content: flex-end; }
.caption { flex: none; height: 17px; background: #dedede; text-align: center; line-height: 18px; position: relative; white-space: nowrap; }
.caption.right { text-align: right; }
.caption .tri { position: absolute; right: 4px; top: 6px; }
.g-model { width: 130px; }
.g-concrete { width: 336px; }
.g-concrete .tools { padding-left: 0; }
.g-doc { width: 537px; }
.g-report { width: 234px; }
.big { display: flex; flex-direction: column; align-items: center; padding: 3px 2px 0; min-width: 44px; }
.big > svg { width: 34px; height: 32px; margin-bottom: 3px; }
.g-concrete .big { min-width: 42px; }
.big.on { background: #fff; border: 1px solid #7fb6e0; height: 68px; padding: 2px 0 0; width: 62px; }
.big.wide { width: 88px; padding-right: 4px; }
.ifc > b { font: 18px/18px "Open Sans", sans-serif; color: #555; }
.ifc > svg { width: 24px; height: 15px; margin: 0 0 2px; }
.ifc > .tri { width: 10px; height: 8px; margin: 3px 0 0; }
.minis { display: grid; grid-template-columns: 18px 18px; gap: 3px 6px; }
.minis.one { grid-template-columns: 18px; margin-left: 0; gap: 5px; padding-top: 1px; }
.minis svg { width: 18px; height: 18px; }
.minis.one svg { height: 16px; }
.vline { width: 1px; height: 66px; background: #666; margin: 2px 2px 0 4px; }
.minirows { display: grid; gap: 5px; }
.minirows div { display: flex; align-items: center; gap: 5px; }
.minirows svg:not(.tri) { width: 16px; height: 16px; }

.work { flex: 1; display: flex; min-height: 0; background: #c9c9c9; border-bottom: 2px solid #a6a6a6; }
.panel-title { display: flex; justify-content: space-between; align-items: center; height: 21px; padding: 0 3px 0 2px; background: #d3d3d3; color: #555; font-size: 12px; }
.pin { width: 22px; height: 10px; }
.props { width: 208px; display: flex; flex-direction: column; background: #ebebeb; border-right: 1px solid #b5b5b5; }
.props .panel-title { font-size: 11px; }
.toolbar { display: flex; align-items: center; height: 26px; overflow: hidden; flex: none; }
.tb { width: 22px; height: 23px; margin-right: 1px; display: grid; place-items: center; flex: none; }
.tb svg { width: 20px; height: 20px; }
.tb.on { background: #fff; border: 1px solid #7fb6e0; width: 24px; margin-right: 0; }
.sep { width: 1px; height: 16px; background: #bbb; margin: 0 2px 0 1px; flex: none; }
.cut { width: 6px; height: 16px; margin-left: 3px; }
.grid { border-collapse: collapse; width: 206px; table-layout: fixed; font-family: "DejaVu Sans Condensed", "Noto Sans", sans-serif; }
.grid tr { height: 18px; }
.grid th, .grid td { padding: 0; height: 18px; line-height: 16px; font-weight: 400; text-align: left; border-bottom: 1px solid #dadada; border-right: 1px solid #d6d6d6; white-space: nowrap; overflow: hidden; }
.grid tr:nth-child(3n), .grid tr:nth-child(3n) > * { height: 17px; }
.grid th { width: 46px; padding-left: 4px; }
.grid td { padding-left: 1px; }
.grid .head, .grid .head th { height: 16px; line-height: 16px; }
.grid .head th { background: #d3d3d3; font-weight: 700; border: 0; }
.grid .head span { float: right; margin-right: 12px; }
.cell { display: flex; align-items: center; gap: 1px; height: 16px; }
.layer { width: 77px; height: 16px; }
.swatch { width: 12px; height: 11px; }
.line { width: 62px; height: 1px; background: #555; }
.dim { color: #999; }
.tabs-bottom { margin-top: auto; display: flex; height: 22px; background: #c9c9c9; }
.tabs-bottom button { background: #d0d0d0; padding: 0 3px; line-height: 20px; white-space: nowrap; }
.tabs-bottom .sel { background: #ebebeb; padding: 0 8px 0 4px; margin-right: 1px; }

.view { flex: 1; min-width: 0; display: flex; flex-direction: column; margin: 0 2px 0 3px; border: solid #aaa; border-width: 0 1px; }
.doc-tabs { display: flex; justify-content: space-between; align-items: center; height: 21px; background: #d3d3d3; border-bottom: 1px solid #aaa; flex: none; }
.doc-tabs button { background: #ebebeb; padding: 0 20px 0 19px; line-height: 20px; font-size: 12px; }
.doc-tabs .tri { width: 10px; height: 6px; margin-right: 3px; }
.canvas { flex: 1; min-height: 0; position: relative; background: #fff; }
.chips { display: flex; gap: 2px; padding: 4px 5px; color: #fff; line-height: 14px; }
.chips span { background: #d6d6d6; padding: 0 9px; }
.scene { position: absolute; right: 0; top: 0; width: 415px; height: 427px; }
.axis text { font: 38px "Open Sans", sans-serif; fill: #333; }
.sheet-tabs { display: flex; height: 20px; background: #d3d3d3; align-items: center; flex: none; }
.sheet-tabs svg { width: 10px; height: 12px; margin: 0 22px 0 5px; }
.sheet-tabs button { background: #ebebeb; height: 20px; padding: 0 4px; font-size: 12px; }

.project { width: 252px; display: flex; flex-direction: column; background: #ebebeb; border-left: 1px solid #aaa; white-space: nowrap; overflow: hidden; }
.project .panel-title { flex: none; font-size: 11px; }
.ptools { display: flex; align-items: center; height: 32px; padding-left: 4px; flex: none; }
.pt { width: 24px; height: 24px; margin-right: 3px; background: #f3f3f3; display: grid; place-items: center; flex: none; }
.pt svg { width: 22px; height: 22px; }
.pt.on { background: #cfe6f6; border: 2px solid #3c97d3; }
.pt.on svg { width: 20px; height: 20px; }
.ptools .sep { height: 22px; margin: 0 2px 0 0; }
.pt:nth-child(5) { margin-right: 0; }
.tree { flex: 1; min-height: 0; overflow: hidden; background: #f6f6f6; border: solid #777; border-width: 2px 0 0 1px; padding-top: 3px; font-size: 12px; }
.node { display: flex; align-items: center; height: 18px; }
.node .ch { width: 8px; height: 10px; margin-right: 6px; }
.node .ic { width: 17px; height: 17px; margin-right: 7px; color: #555; }
.node .blue { color: #2a9bd8; }
.dwg { font: bold 7px "Open Sans", sans-serif; fill: #222; }
.l0 { padding-left: 7px; }
.l1 { padding-left: 28px; }
.l2 { padding-left: 49px; }
.l3 { padding-left: 69px; }
.tree label { display: flex; align-items: center; height: 17px; padding-left: 106px; gap: 6px; }
input[type="checkbox"] { appearance: none; width: 15px; height: 15px; border: 1px solid #444; background: #fff; flex: none; display: grid; place-items: center; margin: 0; }
.tree input[type="checkbox"] { border-color: #777; }
input[type="checkbox"]:checked::before { content: ""; width: 11px; height: 9px; background: #222; clip-path: polygon(0 30%, 15% 15%, 42% 55%, 90% 5%, 100% 25%, 42% 95%); }

.command { flex: none; height: 37px; display: flex; background: #d3d3d3; }
.cmd-side { width: 18px; height: 36px; }
.cmd-main { flex: 1; margin-left: 1px; background: #ebebeb; font: 11px/14px "DejaVu Sans Mono", monospace; }
.history { height: 21px; overflow: hidden; display: flex; flex-direction: column; justify-content: flex-end; border-bottom: 1px solid #999; padding-left: 1px; }
.history p { flex: none; }
.prompt { display: flex; padding: 2px 0 0 1px; }
.prompt input { flex: 1; }

.status { flex: none; display: flex; height: 25px; padding-top: 1px; background: #e9e9e9; white-space: nowrap; overflow: hidden; }
.coords { background: #d3d3d3; width: 157px; line-height: 22px; flex: none; }
.status button { height: 23px; border: 1px solid #d0d0d0; border-left: 0; padding: 0 5px 0 4px; flex: none; }
.status .on { background: #fff; border: 1px solid #6fb0e0; padding: 0 5px; }
.gapbox { width: 36px; background: #d0d0d0; height: 23px; flex: none; }
.status .model { padding: 0 2px 0 1px; }
.status .sb { width: 24px; padding: 0; display: grid; place-items: center; }
.sb svg { width: 18px; height: 18px; }
.space { flex: 1; }
.status .dark { align-self: center; width: 9px; height: 7px; margin-right: 3px; }
.status .mask { line-height: 12px; padding: 0 7px 8px; }
.status .txt { padding: 0 2px; display: flex; align-items: center; gap: 3px; }
.status .lod { padding: 0 0 0 3px; border-right: 0; margin-right: -4px; }
.dot { width: 12px; height: 12px; border-radius: 50%; background: #2b9a3c; border: 1px solid #1c5a26; }

.dialog { position: absolute; left: 279px; top: 50px; width: 660px; background: #f0f0f0; border: 1px solid #5b7167; box-shadow: 1px 3px 9px rgba(0, 0, 0, 0.35); font-family: "DejaVu Sans Condensed", "Noto Sans", sans-serif; }
.dlg-head { display: flex; align-items: center; height: 29px; padding: 0 12px 0 7px; background: #5b7167; color: #fff; }
.dlg-head h2 { flex: 1; margin-left: 4px; font: 12px/20px "Open Sans", sans-serif; }
.dlg-body { padding: 9px 10px 10px 9px; }
.top { display: grid; grid-template-columns: 129px 1fr 78px; grid-auto-rows: 24px; gap: 3px 0; align-items: center; }
.top .row { align-items: center; gap: 7px; padding-left: 1px; }
.top .row .btn { width: 77px; }
.top .row, .top .ro { margin-right: 7px; }
.row { display: flex; }
.btn { height: 22px; background: #e2e2e2; border: 1px solid #c0c0c0; line-height: 18px; }
.btn:disabled { background: #ccc; border-color: #c2c2c2; color: #888; }
input[type="text"] { border: 1px solid #9a9a9a; background: #fff; height: 24px; padding: 0 4px 6px; border-radius: 0; outline: 0; min-width: 0; }
.prompt input[type="text"] { border: 0; background: none; height: 14px; padding: 0; }
.top .ro { background: #f0f0f0; }
.select { position: relative; display: flex; flex: 1; }
.select select { appearance: none; width: 100%; height: 18px; border: 1px solid #b8b8b8; border-radius: 0; background: #e2e2e2; padding: 0 20px 0 1px; line-height: 16px; }
.select svg { position: absolute; right: 4px; top: 4px; width: 10px; height: 10px; pointer-events: none; }
.select.white select { background: #fff; border-color: #999; padding-left: 4px; }
.dlg-tabs { display: flex; align-items: flex-end; height: 21px; margin-top: 7px; }
.dlg-tabs button { height: 19px; padding: 0 5px; border: 1px solid #ddd; border-bottom: 0; }
.dlg-tabs .sel { height: 21px; background: #fff; padding: 0 7px; border-color: #e8e8e8; }
.page { border: 1px solid #e0e0e0; padding: 2px; border-top-color: #fff; }
.page-in { border: 2px solid #fff; display: grid; grid-template-columns: 249px 1fr; gap: 6px; padding: 3px 5px 6px 5px; }
.left { display: flex; flex-direction: column; }
.level { display: flex; align-items: flex-start; justify-content: space-between; height: 124px; padding: 40px 0 0 46px; }
.level svg { margin-top: 2px; }
.level input { width: 96px; }
.lbl { padding-left: 8px; margin-bottom: 3px; }
.lbl.second { margin-top: 4px; margin-bottom: 4px; }
.left .select { flex: none; }
.pair { display: flex; justify-content: space-between; margin: 9px 0 6px; }
.pair .btn { width: 77px; }
fieldset { margin: 0; border: 1px solid #ddd; padding: 0; min-width: 0; }
legend { padding: 0 4px; line-height: 14px; }
.orient { height: 92px; padding-left: 10px; }
.orient legend { margin-left: -10px; }
.toggles { display: flex; gap: 1px; margin-top: 9px; }
.toggles button { width: 34px; height: 32px; border: 1px solid #ccc; background: #e2e2e2; display: grid; place-items: center; }
.toggles svg { width: 18px; height: 13px; }
.toggles .on { background: #c5def5; border-color: #6a9bd8; }
.chk { display: flex; align-items: center; gap: 2px; }
.orient .chk { margin-top: 15px; }
.chk.off { margin-top: auto; color: #777; }
.chk.off input { border-color: #ccc; width: 13px; height: 13px; }
.profile { display: grid; grid-template-columns: 168px 1fr; gap: 5px; height: 160px; }
.preview { border: solid #bbb; border-width: 1px 0 0 1px; display: grid; place-items: center; }
.dimtxt text { font: 20px "Noto Sans", sans-serif; fill: #33a; }
.listbox { border: 1px solid #999; background: #fff; overflow: hidden; padding-top: 1px; }
.list { border-collapse: separate; border-spacing: 0; width: 100%; table-layout: fixed; }
.list td { padding: 0 3px; height: 15px; line-height: 14px; border-bottom: 1px solid #eee; }
.list td:first-child { border-right: 1px solid #eee; }
.anchor { margin-top: 12px; height: 128px; display: flex; justify-content: space-between; padding: 2px 6px 0 26px; }
.anchor legend { margin-left: -26px; }
.radios { display: grid; grid-template-columns: repeat(3, 27px); grid-auto-rows: 21px; margin: 13px 0 6px 3px; }
input[type="radio"] { appearance: none; width: 13px; height: 13px; margin: 0; border: 1px solid #333; border-radius: 50%; background: #fff; display: grid; place-items: center; }
input[type="radio"]:checked::before { content: ""; width: 7px; height: 7px; border-radius: 2px; background: #222; }
.a-right { display: grid; gap: 13px; align-content: start; }
.a-right div { display: flex; align-items: center; gap: 26px; }
.a-right svg { width: 14px; height: 14px; }
.a-right input { width: 115px; }
.deform { margin-top: 4px; height: 76px; display: grid; grid-template-columns: 91px 1fr; gap: 5px 0; padding: 0 5px 0 24px; align-content: start; align-items: center; }
.deform legend { margin-left: -24px; }
.mat { display: block; padding-left: 1px; margin: -1px 0 0; }
.mrow { gap: 6px; align-items: center; }
.dots { width: 33px; }
.crow { margin-top: 4px; align-items: center; }
.crow label { width: 106px; padding-left: 1px; }
.chk.reset { margin-top: 12px; gap: 3px; }
.actions { display: flex; gap: 20px; margin-top: 9px; }
.actions .btn { width: 106px; }
.cancel { margin-left: auto; }
```
